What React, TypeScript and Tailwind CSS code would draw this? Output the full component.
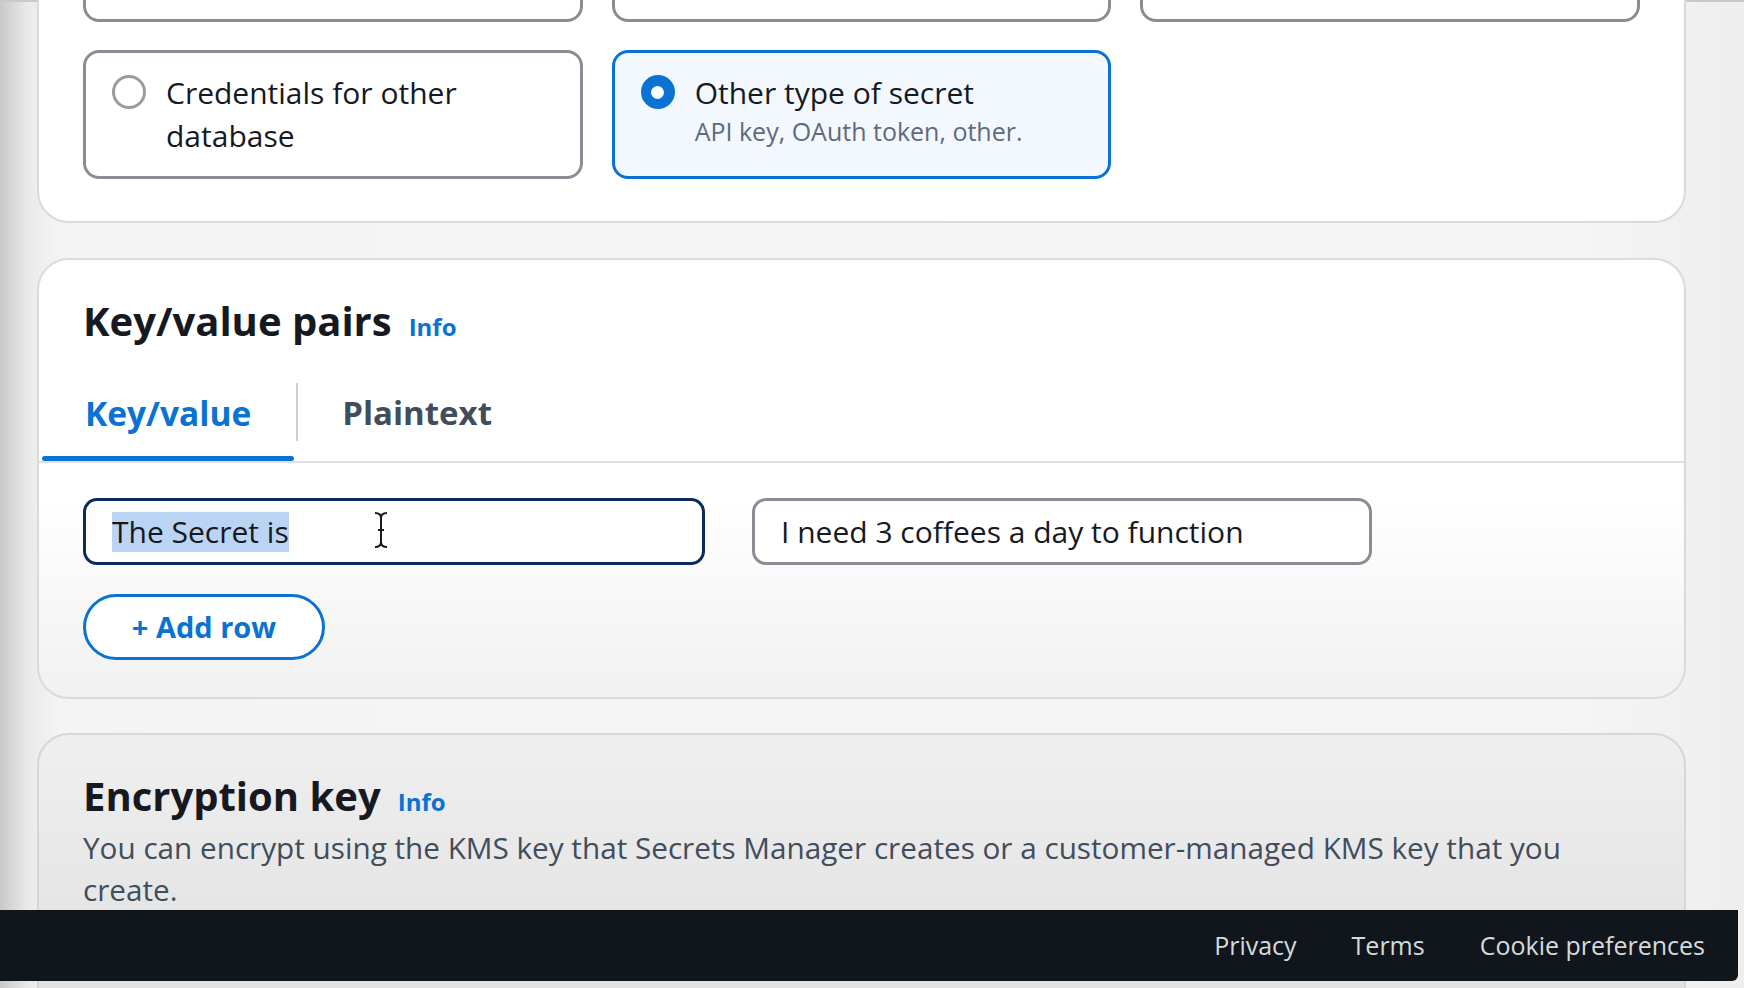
import React from "react";

function Radio({ checked }: { checked?: boolean }) {
  if (checked) {
    return (
      <div className="mt-[4px] flex h-[34px] w-[34px] shrink-0 items-center justify-center rounded-full bg-[#0972d3]">
        <div className="h-[13px] w-[13px] rounded-full bg-white" />
      </div>
    );
  }
  return <div className="mt-[4px] h-[34px] w-[34px] shrink-0 rounded-full border-[3px] border-[#9a9aa2] bg-white" />;
}

function InfoLink() {
  return <span className="text-[24px] font-bold leading-none text-[#0972d3]">Info</span>;
}

export default function App() {
  return (
    <div className="relative h-[988px] w-[1744px] overflow-hidden bg-[linear-gradient(to_right,#c9c9c9_0px,#eaeaea_28px,#f4f4f4_60px,#f5f5f5_90%,#eeeeee_100%)] font-['Open_Sans',sans-serif] text-[#16191f]">
      {/* top thin line */}
      <div className="h-0 border-t-[2px] border-[#c9c9c9]" />

      <div className="w-[1686px] pl-[37px]">
        {/* Secret type card */}
        <div className="-mt-[103px] rounded-b-[32px] border-[2px] border-[#dadada] bg-white px-[44px] pb-[42px] pt-[20px]">
          <div className="grid h-[101px] grid-cols-3 gap-[29px]">
            <div className="rounded-[16px] border-[3px] border-[#8c8c94]" />
            <div className="rounded-[16px] border-[3px] border-[#8c8c94]" />
            <div className="rounded-[16px] border-[3px] border-[#8c8c94]" />
          </div>
          <div className="mt-[28px] grid h-[129px] grid-cols-3 gap-[29px]">
            <div className="flex gap-[20px] rounded-[16px] border-[3px] border-[#8c8c94] pl-[26px] pt-[18px]">
              <Radio />
              <div className="text-[30px] leading-[43px]">
                Credentials for other
                <br />
                database
              </div>
            </div>
            <div className="flex gap-[20px] rounded-[16px] border-[3px] border-[#0972d3] bg-[#f2f8fe] pl-[26px] pt-[18px]">
              <Radio checked />
              <div>
                <div className="text-[30px] leading-[43px]">Other type of secret</div>
                <div className="text-[25px] leading-[34px] text-[#5f6b7a]">API key, OAuth token, other.</div>
              </div>
            </div>
            <div />
          </div>
        </div>

        {/* Key/value pairs card */}
        <div className="mt-[35px] rounded-[32px] border-[2px] border-[#dadada] bg-[linear-gradient(to_bottom,#ffffff_0%,#ffffff_55%,#f1f1f1_100%)]">
          <div className="px-[44px] pt-[37px]">
            <div className="flex h-[48px] items-baseline gap-[17px]">
              <span className="text-[40px] font-bold leading-[48px]">Key/value pairs</span>
              <InfoLink />
            </div>
          </div>
          <div className="mt-[26px] flex items-start border-b-[2px] border-[#e1e1e1] pl-[3px]">
            <div className="flex flex-col">
              <div className="px-[43px] pt-[20px] text-[33.5px] font-bold leading-[44px] text-[#0972d3]">Key/value</div>
              <div className="mt-[21px] h-[5px] rounded-full bg-[#0972d3]" />
            </div>
            <div className="ml-[2px] mt-[12px] h-[58px] w-[2px] bg-[#cfcfd4]" />
            <div className="pl-[44px] pt-[20px] text-[33px] font-bold leading-[44px] text-[#414d5c]">Plaintext</div>
          </div>
          <div className="px-[44px] pb-[37px] pt-[35px]">
            <div className="flex gap-[47px]">
              <div className="relative flex h-[67px] w-[622px] items-center rounded-[14px] border-[3px] border-[#0b2a5e] bg-white pl-[26px]">
                <span className="bg-[#bcd4f3] text-[30px] leading-[40px]">The Secret is</span>
                <svg className="absolute left-[287px] top-[10px]" width="16" height="38" viewBox="0 0 16 38">
                  <path
                    d="M2 2 Q8 2 8 7 Q8 2 14 2 M8 7 V31 M2 36 Q8 36 8 31 Q8 36 14 36 M5 19 H11"
                    stroke="#1a1a1a"
                    strokeWidth="2"
                    fill="none"
                  />
                </svg>
              </div>
              <div className="flex h-[67px] w-[620px] items-center rounded-[14px] border-[3px] border-[#8c8c94] bg-white pl-[26px]">
                <span className="text-[30px] leading-[40px]">I need 3 coffees a day to function</span>
              </div>
            </div>
            <button className="mt-[29px] flex h-[66px] w-[242px] items-center justify-center rounded-full border-[3px] border-[#0972d3] bg-white text-[29px] font-bold text-[#0972d3]">
              + Add row
            </button>
          </div>
        </div>

        {/* Encryption key card */}
        <div className="mt-[34px] h-[400px] rounded-t-[32px] border-[2px] border-[#d6d6d6] bg-[linear-gradient(to_bottom,#efefef,#d9d9d9)] px-[44px] pt-[37px]">
          <div className="flex h-[48px] items-baseline gap-[17px]">
            <span className="text-[40px] font-bold leading-[48px]">Encryption key</span>
            <InfoLink />
          </div>
          <div className="mt-[7px] text-[29.7px] leading-[42px] text-[#414d5c]">
            You can encrypt using the KMS key that Secrets Manager creates or a customer-managed KMS key that you
            <br />
            create.
          </div>
        </div>
      </div>

      {/* Footer */}
      <div className="absolute left-0 top-[910px] flex h-[71px] w-[1738px] items-center justify-end gap-[55px] rounded-br-[6px] bg-[#11161d] pr-[33px] text-[25px] text-[#d5dbdb]">
        <span>Privacy</span>
        <span>Terms</span>
        <span>Cookie preferences</span>
      </div>
    </div>
  );
}
